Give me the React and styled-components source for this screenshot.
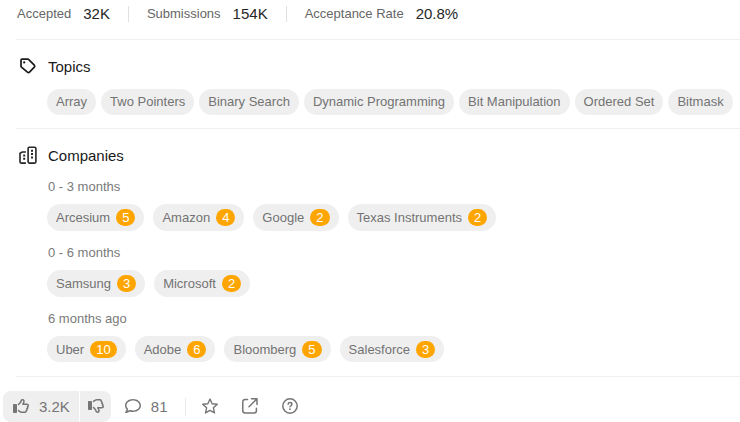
import React from "react";
import styled, { createGlobalStyle } from "styled-components";
import {
  FaRegThumbsUp,
  FaRegThumbsDown,
  FaRegComment,
} from "react-icons/fa6";

const GlobalStyle = createGlobalStyle`
  *, *::before, *::after { box-sizing: border-box; }
  body {
    margin: 0;
    background: #fff;
    font-family: "Liberation Sans", Arial, sans-serif;
    font-size: 13px;
    color: #737373;
    overflow: hidden;
  }
`;

const Page = styled.main`
  display: flex;
  flex-direction: column;
`;

const Content = styled.div`
  padding-left: 16px;
`;

const Stats = styled.dl`
  display: flex;
  align-items: center;
  height: 39px;
  margin: 0;
  padding: 0 0 11px 1px;
`;

const Stat = styled.div`
  display: flex;
  align-items: center;
  gap: 12px;
  line-height: 16px;
  white-space: nowrap;

  & + & {
    margin-left: 18px;
    padding-left: 18px;
    border-left: 1px solid #e0e0e0;
  }
`;

const StatLabel = styled.dt`
  color: #666;
`;

const StatValue = styled.dd`
  margin: 0;
  font-size: 15px;
  color: #262626;
`;

const Section = styled.section`
  padding-left: 31px;
  padding-top: 16px;
  padding-bottom: ${(p) => p.$bottom}px;
  border-top: 1px solid #f0f0f0;
`;

const Heading = styled.h2`
  display: flex;
  align-items: center;
  gap: 10px;
  margin: 0 0 0 -29px;
  height: 20px;
  font-size: 15px;
  font-weight: 400;
  color: #1a1a1a;

  svg {
    flex: none;
  }
`;

const Tags = styled.ul`
  display: flex;
  gap: ${(p) => p.$gap}px;
  margin: 0;
  padding: 0;
  list-style: none;
`;

const TopicTags = styled(Tags)`
  margin-top: 13px;
`;

const Tag = styled.a`
  display: flex;
  align-items: center;
  gap: 6px;
  height: ${(p) => p.$height}px;
  padding: 0 9px ${(p) => p.$bottom}px;
  border-radius: 14px;
  background: #efefef;
  color: #737373;
  text-decoration: none;
  white-space: nowrap;
`;

const Badge = styled.span`
  padding: 0 6px;
  border-radius: 9px;
  line-height: 17px;
  background: #ffa500;
  color: #fff;
`;

const Period = styled.h3`
  margin: 0;
  padding: 14px 0 10px 1px;
  line-height: 15px;
  font-size: 13px;
  font-weight: 400;
  color: #7a7a7a;
`;

const Footer = styled.footer`
  display: flex;
  align-items: center;
  padding: 0 3px;
  margin-top: 14px;
`;

const Rule = styled.div`
  height: 1px;
  background: #f0f0f0;
`;

const Votes = styled.div`
  display: flex;
  gap: 1px;
  border-radius: 8px;
  overflow: hidden;
`;

const Action = styled.button`
  display: flex;
  align-items: center;
  gap: 10px;
  height: 31px;
  padding: 0 0 1px;
  border: 0;
  background: none;
  font: inherit;
  font-size: 15px;
  color: #757575;
  cursor: pointer;

  svg {
    flex: none;
  }
`;

const Vote = styled(Action)`
  padding: 0 ${(p) => p.$right}px 1px ${(p) => p.$left}px;
  background: #efefef;
`;

const CommentAction = styled(Action)`
  margin-left: 14px;
`;

const Tools = styled.div`
  display: flex;
  align-items: center;
  gap: 22px;
  height: 18px;
  margin-left: 17px;
  padding-left: 15px;
  border-left: 1px solid #e8e8e8;
`;

const topics = [
  "Array",
  "Two Pointers",
  "Binary Search",
  "Dynamic Programming",
  "Bit Manipulation",
  "Ordered Set",
  "Bitmask",
];

const periods = [
  {
    label: "0 - 3 months",
    height: 27,
    companies: [["Arcesium", 5], ["Amazon", 4], ["Google", 2], ["Texas Instruments", 2]],
  },
  {
    label: "0 - 6 months",
    height: 27,
    companies: [["Samsung", 3], ["Microsoft", 2]],
  },
  {
    label: "6 months ago",
    height: 26,
    companies: [["Uber", 10], ["Adobe", 6], ["Bloomberg", 5], ["Salesforce", 3]],
  },
];

const TagIcon = () => (
  <svg width="20" height="20" viewBox="0 0 20 20" fill="none" stroke="#1a1a1a" strokeWidth="1.7" strokeLinejoin="round" aria-hidden="true">
    <path d="M3 4.2a1 1 0 0 1 1-1h5.7a1.6 1.6 0 0 1 1.1.5l5.5 5.4a1.5 1.5 0 0 1 0 2.1l-4.8 4.9a1.5 1.5 0 0 1-2.1 0L3.5 11.1a1.6 1.6 0 0 1-.5-1.1z" />
    <circle cx="6.2" cy="6.4" r="1.1" fill="#1a1a1a" stroke="none" />
  </svg>
);

const BuildingsIcon = () => (
  <svg width="20" height="20" viewBox="0 0 20 20" fill="none" stroke="#262626" strokeWidth="1.6" strokeLinejoin="round" aria-hidden="true">
    <rect x="10.1" y="2.3" width="7.8" height="15.8" rx="1.3" />
    <path d="M7.9 7H4.4L2 8.2v8.6a1.3 1.3 0 0 0 1.3 1.3h4.6" />
    <path d="M13 5.8h2M13 9.1h2M13 12.4h2M5.2 10.5h2M5.2 13.8h2" strokeWidth="2" />
  </svg>
);

const StarIcon = () => (
  <svg width="18" height="18" viewBox="0 0 18 18" fill="none" stroke="currentColor" strokeWidth="1.4" strokeLinejoin="round" aria-hidden="true">
    <path d="m9 2 2.1 4.7 5.2.6-3.9 3.5 1.1 5.1L9 13.3l-4.5 2.6 1.1-5.1-3.9-3.5 5.2-.6z" />
  </svg>
);

const ShareIcon = () => (
  <svg width="18" height="18" viewBox="0 0 18 18" fill="none" stroke="currentColor" strokeWidth="1.5" strokeLinecap="round" strokeLinejoin="round" aria-hidden="true">
    <path d="M6.5 2.5H4A2.2 2.2 0 0 0 1.8 4.7v9.1A2.2 2.2 0 0 0 4 16h9.2a2.2 2.2 0 0 0 2.2-2.2v-2.5" />
    <path d="M10.5 1.8H16v5.6M15.8 2 8 9.8" />
  </svg>
);

const HelpIcon = () => (
  <svg width="18" height="18" viewBox="0 0 18 18" fill="none" stroke="currentColor" strokeWidth="1.5" strokeLinecap="round" strokeLinejoin="round" aria-hidden="true">
    <circle cx="9" cy="9" r="7.2" />
    <path d="M7.1 7.2c.1-1 .8-1.6 1.9-1.6s1.9.6 1.9 1.6S10 8.7 9 9.7" />
    <circle cx="9" cy="12.2" r=".9" fill="currentColor" stroke="none" />
  </svg>
);

export default function App() {
  return (
    <Page>
      <GlobalStyle />
      <Content>
        <Stats>
          <Stat><StatLabel>Accepted</StatLabel><StatValue>32K</StatValue></Stat>
          <Stat><StatLabel>Submissions</StatLabel><StatValue>154K</StatValue></Stat>
          <Stat><StatLabel>Acceptance Rate</StatLabel><StatValue>20.8%</StatValue></Stat>
        </Stats>
        <Section $bottom={13}>
          <Heading><TagIcon />Topics</Heading>
          <TopicTags $gap={5}>
            {topics.map((topic) => (
              <li key={topic}><Tag href="#" $height={26} $bottom={2}>{topic}</Tag></li>
            ))}
          </TopicTags>
        </Section>
        <Section $bottom={14}>
          <Heading><BuildingsIcon />Companies</Heading>
          {periods.map(({ label, height, companies }) => (
            <React.Fragment key={label}>
              <Period>{label}</Period>
              <Tags $gap={9}>
                {companies.map(([name, count]) => (
                  <li key={name}>
                    <Tag href="#" $height={height} $bottom={0}>{name}<Badge>{count}</Badge></Tag>
                  </li>
                ))}
              </Tags>
            </React.Fragment>
          ))}
        </Section>
        <Rule />
      </Content>
      <Footer>
        <Votes>
          <Vote $left={10} $right={9} aria-label="Like, 3.2K"><FaRegThumbsUp size={16} />3.2K</Vote>
          <Vote $left={8} $right={7} aria-label="Dislike"><FaRegThumbsDown size={16} /></Vote>
        </Votes>
        <CommentAction aria-label="81 comments"><FaRegComment size={16} />81</CommentAction>
        <Tools>
          <Action aria-label="Add to favorites"><StarIcon /></Action>
          <Action aria-label="Share"><ShareIcon /></Action>
          <Action aria-label="Help"><HelpIcon /></Action>
        </Tools>
      </Footer>
    </Page>
  );
}
